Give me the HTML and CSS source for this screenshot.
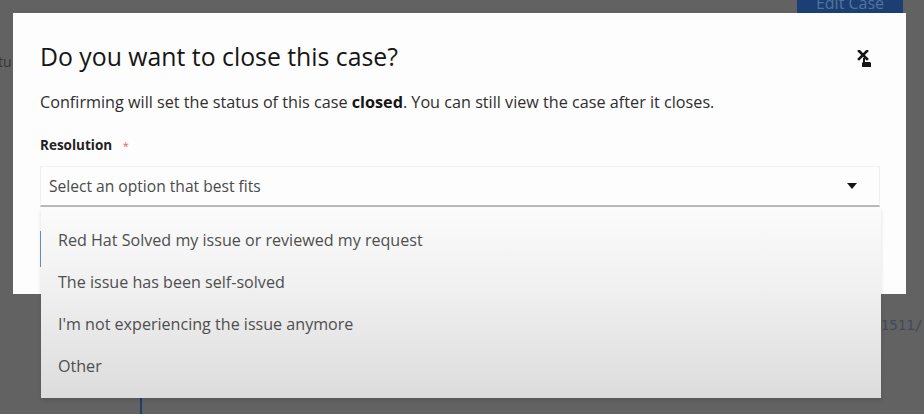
FILE: index.html
```html
<!DOCTYPE html>
<html lang="en">
<head>
<meta charset="utf-8">
<title>Close case</title>
<link rel="stylesheet" href="styles.css">
</head>
<body>
<div class="page">
  <div class="backdrop">
    <div class="bg-top">
      <span class="bg-btn">Edit Case</span>
    </div>
    <div class="bg-row bg-row-status"><span class="bg-text">tu</span></div>
    <div class="bg-row bg-row-link"><span class="bg-link">1511/</span></div>
    <div class="bg-row bg-row-line"><span class="bg-line"></span></div>
  </div>

  <div class="modal" role="dialog" aria-labelledby="mtitle">
    <div class="modal-head">
      <h1 id="mtitle" class="modal-title">Do you want to close this case?</h1>
      <button class="close-btn" aria-label="Close">
        <svg width="20" height="22" viewBox="0 0 20 22">
          <path d="M2 1 L10 9 M10 1 L2 9" stroke="#151515" stroke-width="2.6" stroke-linecap="square"/>
          <path d="M6 8 L8 8 L8 12 L13 12 L14 13 L14 17 L5 17 L5 13 L6 12 Z" fill="#151515"/>
        </svg>
      </button>
    </div>
    <p class="modal-desc">Confirming will set the status of this case <b>closed</b>. You can still view the case after it closes.</p>
    <div class="field">
      <label class="field-label">Resolution <span class="req">*</span></label>
      <div class="select-wrap">
        <div class="select">
          <span class="select-text">Select an option that best fits</span>
          <svg class="caret" width="10" height="6" viewBox="0 0 10 6"><path d="M0 0 H10 L5 6 Z" fill="#151515"/></svg>
        </div>
        <ul class="menu">
          <li class="menu-item">Red Hat Solved my issue or reviewed my request</li>
          <li class="menu-item">The issue has been self-solved</li>
          <li class="menu-item">I'm not experiencing the issue anymore</li>
          <li class="menu-item">Other</li>
        </ul>
      </div>
    </div>
    <div class="modal-foot">
      <span class="primary-btn"></span>
    </div>
  </div>
</div>
</body>
</html>
```
FILE: styles.css
```css
* { box-sizing: border-box; }
html, body { margin: 0; padding: 0; }
body {
  background: #626262;
  font-family: "Open Sans", "Lato", sans-serif;
  overflow: hidden;
}
.page {
  position: relative;
  width: 924px;
  height: 414px;
  overflow: hidden;
}

/* backdrop page (dimmed) */
.backdrop {
  width: 924px;
  height: 414px;
  background: #626262;
  display: flex;
  flex-direction: column;
}
.bg-top {
  display: flex;
  justify-content: flex-end;
  padding-right: 21px;
  height: 13px;
  overflow: hidden;
}
.bg-btn {
  display: block;
  width: 106px;
  height: 30px;
  margin-top: -12px;
  background: #1b3f73;
  color: #5374a0;
  font-size: 16px;
  line-height: 30px;
  text-align: center;
}
.bg-row { display: flex; }
.bg-row-status { margin-top: 41px; height: 16px; }
.bg-text { font-size: 14px; color: #343434; line-height: 16px; margin-left: -2px; }
.bg-row-link { margin-top: 246px; height: 18px; justify-content: flex-end; }
.bg-link { font-family: "DejaVu Sans Mono", monospace; font-size: 14px; color: #3c4a5c; line-height: 18px; margin-right: 1px; }
.bg-row-line { margin-top: 62px; flex: 1; padding-left: 140px; }
.bg-line { width: 2px; background: #1e3e6c; }

/* modal */
.modal {
  position: absolute;
  left: 13px;
  top: 13px;
  width: 893px;
  height: 281px;
  background: #fdfdfd;
  padding: 28px 26px 0 27px;
}
.modal-head {
  display: flex;
  justify-content: space-between;
  align-items: flex-start;
}
.modal-title {
  margin: 0;
  font-size: 24.8px;
  line-height: 30px;
  font-weight: 400;
  color: #161616;
}
.close-btn {
  border: 0;
  background: none;
  padding: 0;
  margin: 9px 3px 0 0;
  width: 20px;
  height: 22px;
  display: flex;
}
.modal-desc {
  margin: 19px 0 0;
  font-size: 16.2px;
  line-height: 22px;
  color: #2e2e2e;
}
.modal-desc b { font-weight: 700; color: #151515; }
.field { margin-top: 24px; }
.field-label {
  display: block;
  font-size: 13.5px;
  line-height: 16px;
  font-weight: 700;
  color: #222;
}
.req { color: #e06b5a; font-weight: 400; margin-left: 7px; font-size: 11px; }
.select-wrap { position: relative; margin-top: 12px; width: 840px; }
.select {
  height: 41px;
  border: 1px solid #f0f0f0;
  border-bottom: 2px solid #b9b9b9;
  background: #fdfdfd;
  display: flex;
  align-items: center;
  justify-content: space-between;
  padding: 0 22px 0 8px;
}
.select-text { font-size: 15.6px; color: #4a4a4a; }
.caret { display: block; }
.menu {
  position: absolute;
  left: 1px;
  top: 42px;
  width: 840px;
  height: 190px;
  margin: 0;
  padding: 11px 0 0;
  list-style: none;
  background: linear-gradient(#fbfbfb, #f1f1f1 40%, #dcdcdc);
  box-shadow: 0 2px 4px rgba(0,0,0,0.12);
  z-index: 2;
}
.menu-item {
  height: 42px;
  line-height: 42px;
  padding-left: 17px;
  font-size: 16.1px;
  color: #4e4e4e;
}
.modal-foot { margin-top: 24px; display: flex; }
.primary-btn {
  display: block;
  width: 90px;
  height: 36px;
  background: #6b93bd;
}
```
